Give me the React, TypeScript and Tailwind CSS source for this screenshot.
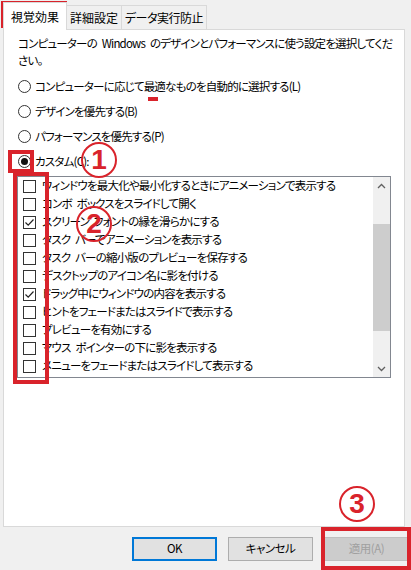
import React from 'react';

const options = [
    { label: 'ウィンドウを最大化や最小化するときにアニメーションで表示する', checked: false },
    { label: 'コンボ ボックスをスライドして開く', checked: false },
    { label: 'スクリーン フォントの縁を滑らかにする', checked: true },
    { label: 'タスク バーでアニメーションを表示する', checked: false },
    { label: 'タスク バーの縮小版のプレビューを保存する', checked: false },
    { label: 'デスクトップのアイコン名に影を付ける', checked: false },
    { label: 'ドラッグ中にウィンドウの内容を表示する', checked: true },
    { label: 'ヒントをフェードまたはスライドで表示する', checked: false },
    { label: 'プレビューを有効にする', checked: false },
    { label: 'マウス ポインターの下に影を表示する', checked: false },
    { label: 'メニューをフェードまたはスライドして表示する', checked: false },
];

const radios = [
    { label: 'コンピューターに応じて最適なものを自動的に選択する(L)', selected: false },
    { label: 'デザインを優先する(B)', selected: false },
    { label: 'パフォーマンスを優先する(P)', selected: false },
    { label: 'カスタム(C):', selected: true },
];

function Radio({ selected }: { selected: boolean }) {
    return (
        <span className="w-[13px] h-[13px] rounded-full border border-[#333] bg-white flex items-center justify-center shrink-0">
            {selected && <span className="w-[7px] h-[7px] rounded-full bg-[#111]" />}
        </span>
    );
}

function Checkbox({ checked }: { checked: boolean }) {
    return (
        <span className="w-[13px] h-[13px] border border-[#333] bg-white flex items-center justify-center shrink-0">
            {checked && (
                <svg width="11" height="11" viewBox="0 0 11 11">
                    <polyline points="1.5,5.5 4.2,8.2 9.5,2.5" fill="none" stroke="#222" strokeWidth="1.2" />
                </svg>
            )}
        </span>
    );
}

// 赤い丸数字 (注記)
function Marker({ n, className }: { n: string; className: string }) {
    return (
        <div className={`absolute w-[36px] h-[36px] rounded-full border-2 border-[#d9232b] flex items-center justify-center text-[28px] font-bold leading-none tracking-normal text-[#d9232b] font-['Liberation_Sans',sans-serif] ${className}`}>
            {n}
        </div>
    );
}

export default function App() {
    return (
        <div className="relative w-[411px] h-[570px] bg-[#f0f0f0] overflow-hidden text-[12px] text-black font-['Noto_Sans_CJK_JP','Noto_Sans',sans-serif] [font-feature-settings:'palt']">
            {/* タブ */}
            <div className="flex items-end h-[30px] pl-[3px]">
                <div className="h-[28px] w-[64px] bg-white border border-b-0 border-[#d9d9d9] flex items-center justify-center relative z-10">視覚効果</div>
                <div className="h-[25px] w-[55px] bg-[#f0f0f0] border border-l-0 border-[#d9d9d9] flex items-center justify-center">詳細設定</div>
                <div className="h-[25px] w-[85px] bg-[#f0f0f0] border border-l-0 border-[#d9d9d9] flex items-center justify-center tracking-[-0.5px]">データ実行防止</div>
            </div>

            {/* パネル */}
            <div className="ml-[3px] -mt-px w-[402px] h-[498px] bg-white border border-[#d9d9d9] pt-[5px] text-[11.5px] tracking-[-0.8px] [word-spacing:3px]">
                <p className="pl-[14px] pr-[2px] leading-[17px] whitespace-nowrap">
                    コンピューターの Windows のデザインとパフォーマンスに使う設定を選択してくだ<br />さい。
                </p>
                <div className="mt-[5px] pl-[14px] flex flex-col">
                    {radios.map(r => (
                        <div key={r.label} className="h-[25px] flex items-center gap-[4px]">
                            <Radio selected={r.selected} />
                            <span>{r.label}</span>
                        </div>
                    ))}
                </div>
                <div className="mt-[2px] ml-[13px] w-[374px] h-[202px] border border-[#828790] flex">
                    <div className="flex-1 flex flex-col">
                        {options.map(o => (
                            <div key={o.label} className="h-[18px] flex items-center pl-[5px] gap-[6px] whitespace-nowrap">
                                <Checkbox checked={o.checked} />
                                <span>{o.label}</span>
                            </div>
                        ))}
                    </div>
                    <div className="w-[17px] bg-[#f0f0f0] flex flex-col">
                        <div className="h-[17px] flex items-center justify-center">
                            <svg width="9" height="6" viewBox="0 0 9 6"><polyline points="1,5 4.5,1.5 8,5" fill="none" stroke="#606060" strokeWidth="1.3" /></svg>
                        </div>
                        <div className="h-[30px]" />
                        <div className="h-[107px] bg-[#cdcdcd]" />
                        <div className="flex-1" />
                        <div className="h-[17px] flex items-center justify-center">
                            <svg width="9" height="6" viewBox="0 0 9 6"><polyline points="1,1 4.5,4.5 8,1" fill="none" stroke="#606060" strokeWidth="1.3" /></svg>
                        </div>
                    </div>
                </div>
            </div>

            {/* ボタン */}
            <div className="flex gap-[11px] pl-[132px] mt-[10px] text-[11.5px] tracking-[-0.5px]">
                <button className="w-[85px] h-[24px] bg-[#e1e1e1] border-2 border-[#0078d7]">OK</button>
                <button className="w-[85px] h-[24px] bg-[#e1e1e1] border border-[#adadad]">キャンセル</button>
                <button className="w-[85px] h-[24px] bg-[#cccccc] border border-[#bfbfbf] text-[#a0a0a0]">適用(A)</button>
            </div>

            {/* 赤枠の注記 */}
            <div className="absolute left-[1px] top-[1px] w-[66px] h-[27px] border-[4px] border-[#d9232b]" />
            <div className="absolute left-[148px] top-[97px] w-[10px] h-[4px] bg-[#d9232b]" />
            <div className="absolute left-[8px] top-[150px] w-[26px] h-[23px] border-[4px] border-[#d9232b]" />
            <div className="absolute left-[13px] top-[172px] w-[36px] h-[212px] border-[4px] border-[#d9232b]" />
            <div className="absolute left-[321px] top-[527px] w-[90px] h-[43px] border-[4px] border-[#d9232b]" />
            <Marker n="1" className="left-[81px] top-[142px]" />
            <Marker n="2" className="left-[76px] top-[206px]" />
            <Marker n="3" className="left-[339px] top-[486px]" />
        </div>
    );
}
